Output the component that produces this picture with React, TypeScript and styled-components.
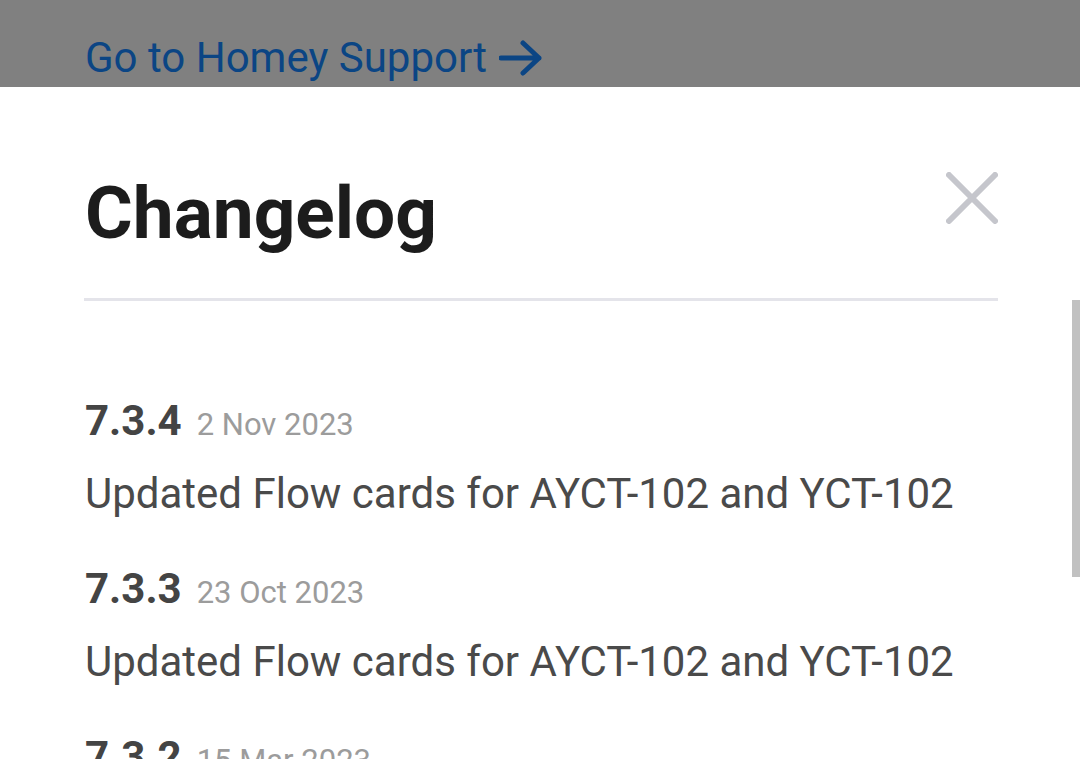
import styled, { createGlobalStyle } from "styled-components"

const GlobalStyle = createGlobalStyle`
  html, body {
    margin: 0;
    padding: 0;
    overflow: hidden;
    background: #808080;
  }
  body {
    font-family: Roboto, "Noto Sans", sans-serif;
  }
`

const Screen = styled.div`
  width: 1080px;
  height: 759px;
  display: flex;
  flex-direction: column;
  overflow: hidden;
`

const Backdrop = styled.div`
  height: 87px;
  flex-shrink: 0;
  background: #808080;
  padding-left: 85px;
  box-sizing: border-box;
  display: flex;
  align-items: flex-end;
`

const SupportLink = styled.a`
  display: flex;
  align-items: center;
  gap: 12px;
  font-size: 42px;
  line-height: 1;
  color: #0b4584;
  text-decoration: none;
  padding-bottom: 8px;
`

const Sheet = styled.div`
  flex: 1;
  background: #fff;
  position: relative;
  padding: 0 82px 0 85px;
  box-sizing: border-box;
`

const Header = styled.div`
  display: flex;
  justify-content: space-between;
  align-items: flex-start;
  padding-top: 84px;
  padding-bottom: 43px;
  border-bottom: 3px solid #e4e4ea;
  margin-left: -1px;
`

const Title = styled.h1`
  margin: 0;
  margin-left: 1px;
  font-size: 73px;
  line-height: 84px;
  font-weight: 700;
  color: #1c1c1c;
`

const Close = styled.button`
  border: none;
  background: none;
  padding: 0;
  margin-top: 1px;
  width: 52px;
  height: 52px;
  cursor: pointer;
`

const Entries = styled.div`
  padding-top: 95px;
  display: flex;
  flex-direction: column;
`

const Entry = styled.div`
  display: flex;
  flex-direction: column;
  height: 168px;
`

const VersionRow = styled.div`
  display: flex;
  align-items: baseline;
  gap: 15px;
  line-height: 50px;
`

const Version = styled.span`
  font-size: 42px;
  font-weight: 700;
  color: #444;
`

const Date = styled.span`
  font-size: 31px;
  color: #9c9c9c;
`

const Description = styled.div`
  margin-top: 19px;
  font-size: 42px;
  line-height: 50px;
  color: #4a4a4a;
`

const Scrollbar = styled.div`
  position: absolute;
  right: 0;
  top: 213px;
  width: 8px;
  height: 277px;
  background: #c1c1c1;
`

const entries = [
  { version: "7.3.4", date: "2 Nov 2023", text: "Updated Flow cards for AYCT-102 and YCT-102" },
  { version: "7.3.3", date: "23 Oct 2023", text: "Updated Flow cards for AYCT-102 and YCT-102" },
  { version: "7.3.2", date: "15 Mar 2023", text: "Updated Flow cards" },
]

export default function App() {
  return (
    <Screen>
      <GlobalStyle />
      <Backdrop>
        <SupportLink href="#">
          Go to Homey Support
          <svg width="44" height="36" viewBox="0 0 44 36" fill="none">
            <path d="M2 18h38M24 3l16 15-16 15" stroke="#0b4584" strokeWidth="5" strokeLinecap="round" strokeLinejoin="round" />
          </svg>
        </SupportLink>
      </Backdrop>
      <Sheet>
        <Header>
          <Title>Changelog</Title>
          <Close aria-label="Close">
            <svg width="52" height="52" viewBox="0 0 52 52">
              <path d="M3 3l46 46M49 3L3 49" stroke="#c5c6cc" strokeWidth="6" strokeLinecap="round" />
            </svg>
          </Close>
        </Header>
        <Entries>
          {entries.map((e) => (
            <Entry key={e.version}>
              <VersionRow>
                <Version>{e.version}</Version>
                <Date>{e.date}</Date>
              </VersionRow>
              <Description>{e.text}</Description>
            </Entry>
          ))}
        </Entries>
        <Scrollbar />
      </Sheet>
    </Screen>
  )
}
